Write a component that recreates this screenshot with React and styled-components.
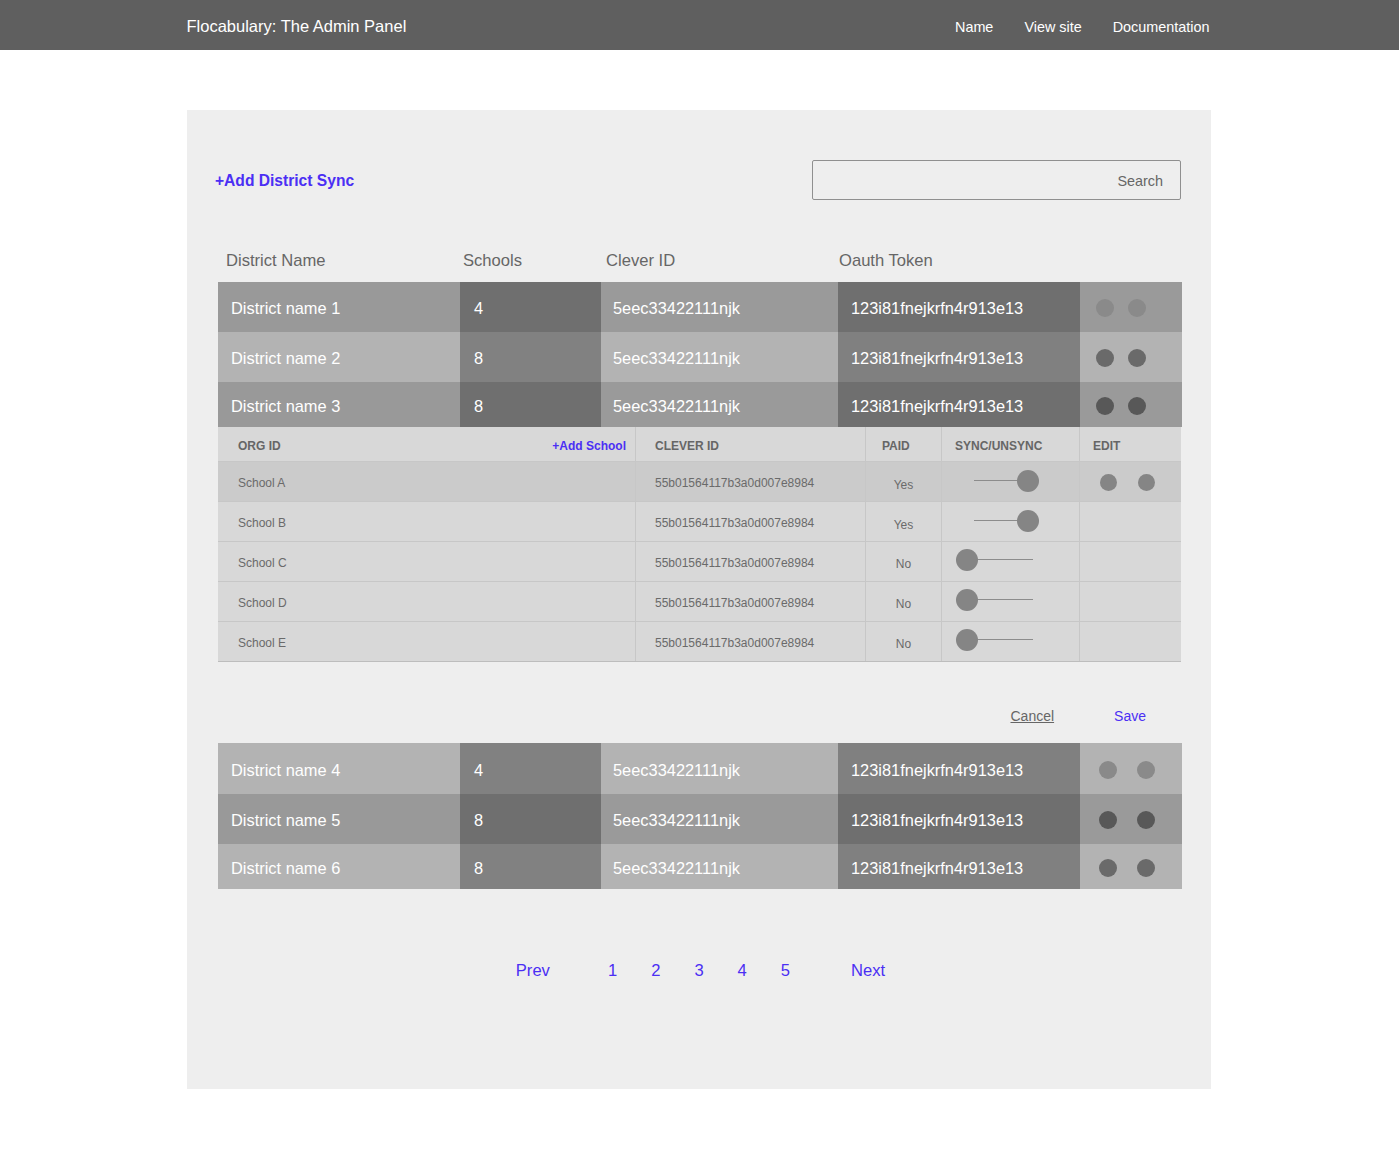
import React from "react";
import styled, { createGlobalStyle } from "styled-components";

const Global = createGlobalStyle`
  html, body { margin: 0; padding: 0; background: #ffffff; }
  body { font-family: "Liberation Sans", Arial, Helvetica, sans-serif; }
  * { box-sizing: border-box; }
`;

const BLUE = "#4b2ff4";

const TopBar = styled.header`
  height: 50px;
  background: #5f5f5f;
`;

const TopInner = styled.div`
  width: 1024px;
  height: 100%;
  margin-left: calc(50% - 513px);
  display: flex;
  align-items: center;
  justify-content: space-between;
  padding-top: 3px;
`;

const Brand = styled.div`
  color: #ffffff;
  font-size: 16.5px;
`;

const Nav = styled.nav`
  display: flex;
  gap: 31px;
  margin-right: 1px;
`;

const NavLink = styled.a`
  color: #ffffff;
  font-size: 14.4px;
  text-decoration: none;
`;

const Panel = styled.main`
  width: 1024px;
  margin: 60px 0 0 calc(50% - 512.5px);
  background: #eeeeee;
  padding: 50px 29px 107px 31px;
`;

const Toolbar = styled.div`
  display: flex;
  align-items: center;
  justify-content: space-between;
  height: 40px;
`;

const AddLink = styled.a`
  color: ${BLUE};
  font-weight: bold;
  font-size: 15.6px;
  margin-left: -3px;
  padding-top: 2px;
  text-decoration: none;
`;

const SearchBox = styled.div`
  width: 369px;
  height: 40px;
  border: 1px solid #8f8f8f;
  border-radius: 2px;
  margin-right: 1px;
  display: flex;
  align-items: center;
  justify-content: flex-end;
  padding: 2px 17px 0 0;
  color: #666666;
  font-size: 14.4px;
`;

const COLS = "242px 141px 237px 242px 102px";

const HeadRow = styled.div`
  display: grid;
  grid-template-columns: ${COLS};
  margin-top: 40px;
  height: 42px;
  align-items: center;
  color: #666666;
  font-size: 16.6px;
`;

const HeadCell = styled.div`
  padding-left: ${(p) => p.$pad}px;
`;

const DistrictRow = styled.div`
  display: grid;
  grid-template-columns: ${COLS};
  height: ${(p) => p.$h}px;
`;

const Cell = styled.div`
  background: ${(p) => p.$bg};
  color: #ffffff;
  font-size: 16.4px;
  display: flex;
  align-items: center;
  padding: 3px 0 0 ${(p) => p.$pad}px;
`;

const DotGroup = styled.div`
  background: ${(p) => p.$bg};
  display: flex;
  align-items: center;
  gap: ${(p) => p.$gap}px;
  padding: ${(p) => p.$top || 0}px 0 0 ${(p) => p.$pad}px;
`;

const Dot = styled.span`
  width: ${(p) => p.$size}px;
  height: ${(p) => p.$size}px;
  border-radius: 50%;
  background: ${(p) => p.$color};
`;

const SubTable = styled.div`
  width: 963px;
  border-bottom: 1px solid #bdbdbd;
`;

const SUB_COLS = "417px 230px 76px 138px 102px";

const SubRow = styled.div`
  display: grid;
  grid-template-columns: ${SUB_COLS};
  height: ${(p) => p.$h}px;
  background: ${(p) => (p.$active ? "#cbcbcb" : "#d8d8d8")};
  border-top: ${(p) => (p.$first ? "none" : "1px solid #c7c7c7")};
`;

const SubCell = styled.div`
  display: flex;
  align-items: center;
  justify-content: ${(p) => (p.$center ? "center" : "flex-start")};
  padding-left: ${(p) => p.$pad || 0}px;
  padding-top: ${(p) => (p.$drop == null ? 2 : p.$drop)}px;
  border-left: ${(p) => (p.$edge ? "1px solid #c7c7c7" : "none")};
  color: #6a6a6a;
  font-size: 12px;
`;

const SubHeadCell = styled(SubCell)`
  font-weight: bold;
  color: #666666;
  padding-top: 4px;
`;

const OrgHead = styled(SubHeadCell)`
  justify-content: space-between;
  padding-right: 9px;
`;

const AddSchool = styled.a`
  color: ${BLUE};
  font-weight: bold;
  font-size: 12px;
  text-decoration: none;
`;

const Switch = styled.div`
  position: relative;
  width: ${(p) => (p.$on ? 65 : 77)}px;
  height: 22px;
  margin-left: ${(p) => (p.$on ? 32 : 14)}px;
  margin-top: ${(p) => (p.$on ? -4 : -6)}px;

  &::before {
    content: "";
    position: absolute;
    left: 0;
    right: 0;
    top: 10px;
    height: 1px;
    background: #8c8c8c;
  }
`;

const Thumb = styled.span`
  position: absolute;
  top: 0;
  ${(p) => (p.$on ? "right: 0;" : "left: 0;")}
  width: 22px;
  height: 22px;
  border-radius: 50%;
  background: #858585;
`;

const Actions = styled.div`
  display: flex;
  justify-content: flex-end;
  align-items: center;
  gap: 60px;
  height: 28px;
  margin: 40px 0 13px;
  padding-right: 36px;
  font-size: 14px;
`;

const CancelLink = styled.a`
  color: #666666;
  text-decoration: underline;
`;

const SaveLink = styled.a`
  color: ${BLUE};
  font-weight: 500;
  text-decoration: none;
`;

const Pager = styled.div`
  display: flex;
  justify-content: center;
  align-items: center;
  height: 22px;
  margin-top: 71px;
  padding-left: 1px;
  font-size: 16.6px;
  color: ${BLUE};
`;

const PageNums = styled.div`
  display: flex;
  gap: 34px;
  margin: 0 61px 0 58px;
`;

const PageLink = styled.a`
  color: ${BLUE};
  text-decoration: none;
`;

const DARK = ["#999999", "#6f6f6f", "#9a9a9a", "#6f6f6f", "#9a9a9a"];
const LIGHT = ["#b3b3b3", "#818181", "#b3b3b3", "#808080", "#b3b3b3"];

const topRows = [
  { name: "District name 1", schools: 4, tones: DARK, dot: "#8a8a8a", h: 50 },
  { name: "District name 2", schools: 8, tones: LIGHT, dot: "#6a6a6a", h: 50 },
  { name: "District name 3", schools: 8, tones: DARK, dot: "#585858", h: 45 },
];

const bottomRows = [
  { name: "District name 4", schools: 4, tones: LIGHT, dot: "#8a8a8a", h: 51 },
  { name: "District name 5", schools: 8, tones: DARK, dot: "#585858", h: 50 },
  { name: "District name 6", schools: 8, tones: LIGHT, dot: "#6a6a6a", h: 45 },
];

const schools = [
  { name: "School A", paid: "Yes", on: true, active: true },
  { name: "School B", paid: "Yes", on: true },
  { name: "School C", paid: "No", on: false },
  { name: "School D", paid: "No", on: false },
  { name: "School E", paid: "No", on: false },
];

function District({ row, dots }) {
  const [a, b, c, d, e] = row.tones;
  return (
    <DistrictRow $h={row.h}>
      <Cell $bg={a} $pad={13}>{row.name}</Cell>
      <Cell $bg={b} $pad={14}>{row.schools}</Cell>
      <Cell $bg={c} $pad={12}>5eec33422111njk</Cell>
      <Cell $bg={d} $pad={13}>123i81fnejkrfn4r913e13</Cell>
      <DotGroup $bg={e} $pad={dots.pad} $gap={dots.gap} $top={2}>
        <Dot $size={dots.size} $color={row.dot} />
        <Dot $size={dots.size} $color={row.dot} />
      </DotGroup>
    </DistrictRow>
  );
}

function Schools() {
  return (
    <SubTable>
      <SubRow $h={34} $first>
        <OrgHead $pad={20}>
          ORG ID
          <AddSchool href="#">+Add School</AddSchool>
        </OrgHead>
        <SubHeadCell $pad={19} $edge>CLEVER ID</SubHeadCell>
        <SubHeadCell $pad={16} $edge>PAID</SubHeadCell>
        <SubHeadCell $pad={13} $edge>SYNC/UNSYNC</SubHeadCell>
        <SubHeadCell $pad={13} $edge>EDIT</SubHeadCell>
      </SubRow>
      {schools.map((s) => (
        <SubRow key={s.name} $h={40} $active={s.active}>
          <SubCell $pad={20}>{s.name}</SubCell>
          <SubCell $pad={19} $edge>55b01564117b3a0d007e8984</SubCell>
          <SubCell $center $edge $drop={s.on ? 7 : 4}>{s.paid}</SubCell>
          <SubCell $edge>
            <Switch $on={s.on}>
              <Thumb $on={s.on} />
            </Switch>
          </SubCell>
          <SubCell $edge $pad={20}>
            {s.active && (
              <DotGroup $bg="transparent" $pad={0} $gap={21}>
                <Dot $size={17} $color="#858585" />
                <Dot $size={17} $color="#858585" />
              </DotGroup>
            )}
          </SubCell>
        </SubRow>
      ))}
    </SubTable>
  );
}

export default function App() {
  return (
    <>
      <Global />
      <TopBar>
        <TopInner>
          <Brand>Flocabulary: The Admin Panel</Brand>
          <Nav>
            <NavLink href="#">Name</NavLink>
            <NavLink href="#">View site</NavLink>
            <NavLink href="#">Documentation</NavLink>
          </Nav>
        </TopInner>
      </TopBar>
      <Panel>
        <Toolbar>
          <AddLink href="#">+Add District Sync</AddLink>
          <SearchBox>Search</SearchBox>
        </Toolbar>
        <HeadRow>
          <HeadCell $pad={8}>District Name</HeadCell>
          <HeadCell $pad={3}>Schools</HeadCell>
          <HeadCell $pad={5}>Clever ID</HeadCell>
          <HeadCell $pad={1}>Oauth Token</HeadCell>
          <HeadCell />
        </HeadRow>
        {topRows.map((r) => (
          <District key={r.name} row={r} dots={{ pad: 16, gap: 14, size: 18 }} />
        ))}
        <Schools />
        <Actions>
          <CancelLink href="#">Cancel</CancelLink>
          <SaveLink href="#">Save</SaveLink>
        </Actions>
        {bottomRows.map((r) => (
          <District key={r.name} row={r} dots={{ pad: 19, gap: 20, size: 18 }} />
        ))}
        <Pager>
          <PageLink href="#">Prev</PageLink>
          <PageNums>
            {[1, 2, 3, 4, 5].map((n) => (
              <PageLink key={n} href="#">{n}</PageLink>
            ))}
          </PageNums>
          <PageLink href="#">Next</PageLink>
        </Pager>
      </Panel>
    </>
  );
}
